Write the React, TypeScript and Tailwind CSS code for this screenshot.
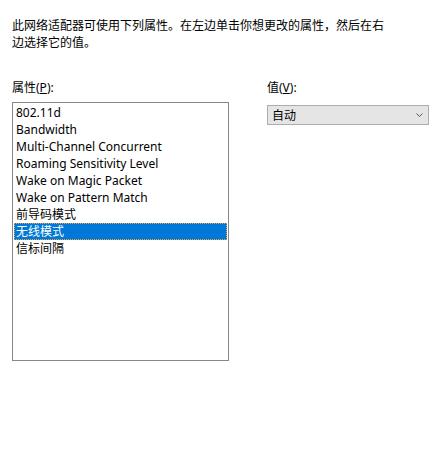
import { useState } from "react";

const items = [
  "802.11d",
  "Bandwidth",
  "Multi-Channel Concurrent",
  "Roaming Sensitivity Level",
  "Wake on Magic Packet",
  "Wake on Pattern Match",
  "前导码模式",
  "无线模式",
  "信标间隔",
];

export default function App() {
  const [selected, setSelected] = useState(7);

  return (
    <div
      className="w-[441px] h-[463px] bg-white text-black text-[12px] leading-[17px] px-[12px] pt-[17px]"
      style={{ fontFamily: '"Noto Sans", "Noto Sans CJK SC", sans-serif' }}
    >
      <p>
        此网络适配器可使用下列属性。在左边单击你想更改的属性，然后在右
        <br />
        边选择它的值。
      </p>

      <div className="flex mt-[28px]">
        {/* Property list */}
        <div className="w-[217px] flex flex-col">
          <div>
            属性(<span className="underline">P</span>):
          </div>
          <ul className="mt-[6px] h-[259px] border border-[#828790] bg-white p-px">
            {items.map((it, i) => (
              <li
                key={it}
                onClick={() => setSelected(i)}
                className={`h-[17px] pl-[2px] cursor-default whitespace-nowrap ${
                  i === selected
                    ? "bg-[#0078d7] text-white outline outline-1 outline-dotted outline-[#f5a040] -outline-offset-1"
                    : ""
                }`}
              >
                {it}
              </li>
            ))}
          </ul>
        </div>

        {/* Value */}
        <div className="ml-[38px] flex flex-col">
          <div>
            值(<span className="underline">V</span>):
          </div>
          <div className="mt-[9px] w-[162px] h-[20px] border border-[#adadad] bg-[#e5e5e5] flex items-center justify-between pl-[4px] pr-[5px]">
            <span>自动</span>
            <svg width="7" height="4" viewBox="0 0 7 4" fill="none">
              <path d="M0.5 0.5 L3.5 3.5 L6.5 0.5" stroke="#555" strokeWidth="1" />
            </svg>
          </div>
        </div>
      </div>
    </div>
  );
}
